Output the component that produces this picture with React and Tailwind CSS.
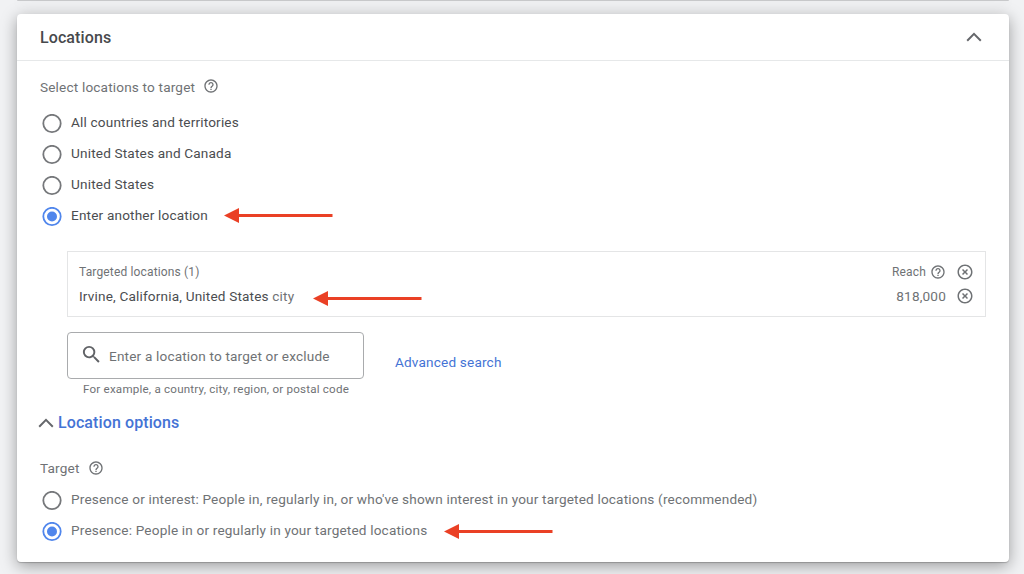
import { useState } from 'react';
import { MdHelpOutline, MdHighlightOff, MdSearch } from 'react-icons/md';

const countryOptions = [
	'All countries and territories',
	'United States and Canada',
	'United States',
	'Enter another location',
];

const targetOptions = [
	"Presence or interest: People in, regularly in, or who've shown interest in your targeted locations (recommended)",
	'Presence: People in or regularly in your targeted locations',
];

function Arrow({ className }) {
	return (
		<svg width="109" height="16" viewBox="0 0 109 16" className={`shrink-0 ${className}`}>
			<path d="M0 7.500 15 0v15z" fill="#ea4025" />
			<path d="M13 7.500h95.500" stroke="#ea4025" strokeWidth="3" />
		</svg>
	);
}

function Chevron() {
	return (
		<svg width="16" height="10" viewBox="0 0 16 10" className="shrink-0">
			<path d="M1.200 8.700 8 1.900l6.800 6.800" fill="none" stroke="#65676b" strokeWidth="2" />
		</svg>
	);
}

function Radio({ checked }) {
	return (
		<svg width="20" height="20" viewBox="0 0 20 20" className="shrink-0">
			<circle
				cx="10"
				cy="9.500"
				r="8.700"
				fill="none"
				strokeWidth="1.800"
				stroke={checked ? '#5086ec' : '#76787b'}
			/>
			{checked && <circle cx="10" cy="9.500" r="5" fill="#5086ec" />}
		</svg>
	);
}

function RadioRow({ label, checked, onSelect, labelClass, children }) {
	return (
		<div className="flex h-[31px] items-center">
			<button
				type="button"
				role="radio"
				aria-checked={checked}
				onClick={onSelect}
				className="flex items-center gap-[9px]"
			>
				<Radio checked={checked} />
				<span className={`-mt-[3px] mb-px whitespace-nowrap ${labelClass}`}>{label}</span>
			</button>
			{children}
		</div>
	);
}

export default function App() {
	const [country, setCountry] = useState(3);
	const [target, setTarget] = useState(1);

	return (
		<div className="h-[574px] overflow-hidden bg-[#f1f2f4] font-['Roboto',sans-serif] text-[13.6px] leading-5 tracking-[0.17px] text-[#6f7275]">
			<div className="mr-[15px] ml-[17px] h-px rounded-b bg-[#c8c9cb] shadow-[0_1px_14px_rgba(0,0,0,0.2)]" />

			<section className="mt-[13px] mr-[15px] ml-[17px] h-[548px] rounded bg-white shadow-[0_1px_1px_rgba(0,0,0,0.2),0_4px_16px_rgba(0,0,0,0.36)]">
				<header className="flex h-[47px] items-center justify-between border-b border-[#e6e8e9] pr-[27px] pl-[23px]">
					<h2 className="mt-px text-base font-medium tracking-[0.1px] text-[#47494c]">Locations</h2>
					<Chevron />
				</header>

				<div className="pt-4 pr-[23px] pl-[23px]">
					<div className="flex h-5 items-center gap-2">
						<span className="-mt-px">Select locations to target</span>
						<MdHelpOutline className="-mt-0.5 size-4" />
					</div>

					<div role="radiogroup" className="mt-[11px] pl-0.5">
						{countryOptions.map((label, i) => (
							<RadioRow
								key={label}
								label={label}
								checked={country === i}
								onSelect={() => setCountry(i)}
								labelClass="text-[#4b4d50]"
							>
								{i === 3 && <Arrow className="-mt-px ml-4" />}
							</RadioRow>
						))}
					</div>

					<div className="mt-[19px] ml-[27px] h-[66px] border border-[#e4e5e6] pt-[9px] pr-[11px] pl-[11px]">
						<div className="flex h-[22px] items-center justify-between text-xs tracking-[0.15px]">
							<span>Targeted locations (1)</span>
							<span className="flex items-center">
								Reach
								<MdHelpOutline className="ml-1 size-4" />
								<MdHighlightOff className="ml-2.5 size-[18px]" />
							</span>
						</div>
						<div className="flex h-[26px] items-center">
							<span className="-mt-px">
								<span className="text-[#4b4d50]">Irvine, California, United States</span> city
							</span>
							<Arrow className="mt-[6px] ml-[19px]" />
							<span className="ml-auto">818,000</span>
							<MdHighlightOff className="ml-2.5 size-[18px]" />
						</div>
					</div>

					<div className="mt-[15px] ml-[27px] flex">
						<div className="flex h-[47px] w-[297px] items-center rounded border border-[#a9abad] pl-3">
							<MdSearch className="-mt-0.5 size-[23px] text-[#606266]" />
							<input
								placeholder="Enter a location to target or exclude"
								className="ml-1.5 w-60 tracking-[0.17px] outline-none placeholder:text-[#6f7275]"
							/>
						</div>
						<a href="#" className="mt-5 ml-[31px] text-[#4473d5]">
							Advanced search
						</a>
					</div>
					<p className="ml-[43px] text-[11.6px] leading-5 tracking-[0.21px]">
						For example, a country, city, region, or postal code
					</p>

					<button
						type="button"
						className="mt-3.5 -ml-0.5 flex h-5 items-center gap-1 text-base font-medium tracking-[0.1px] text-[#4473d5]"
					>
						<Chevron />
						Location options
					</button>

					<div className="mt-[25px] flex h-5 items-center gap-2">
						<span>Target</span>
						<MdHelpOutline className="-mt-px size-4" />
					</div>
					<div role="radiogroup" className="mt-[7px] pl-0.5">
						{targetOptions.map((label, i) => (
							<RadioRow
								key={label}
								label={label}
								checked={target === i}
								onSelect={() => setTarget(i)}
								labelClass=""
							>
								{i === 1 && <Arrow className="mt-px ml-[17px]" />}
							</RadioRow>
						))}
					</div>
				</div>
			</section>
		</div>
	);
}
